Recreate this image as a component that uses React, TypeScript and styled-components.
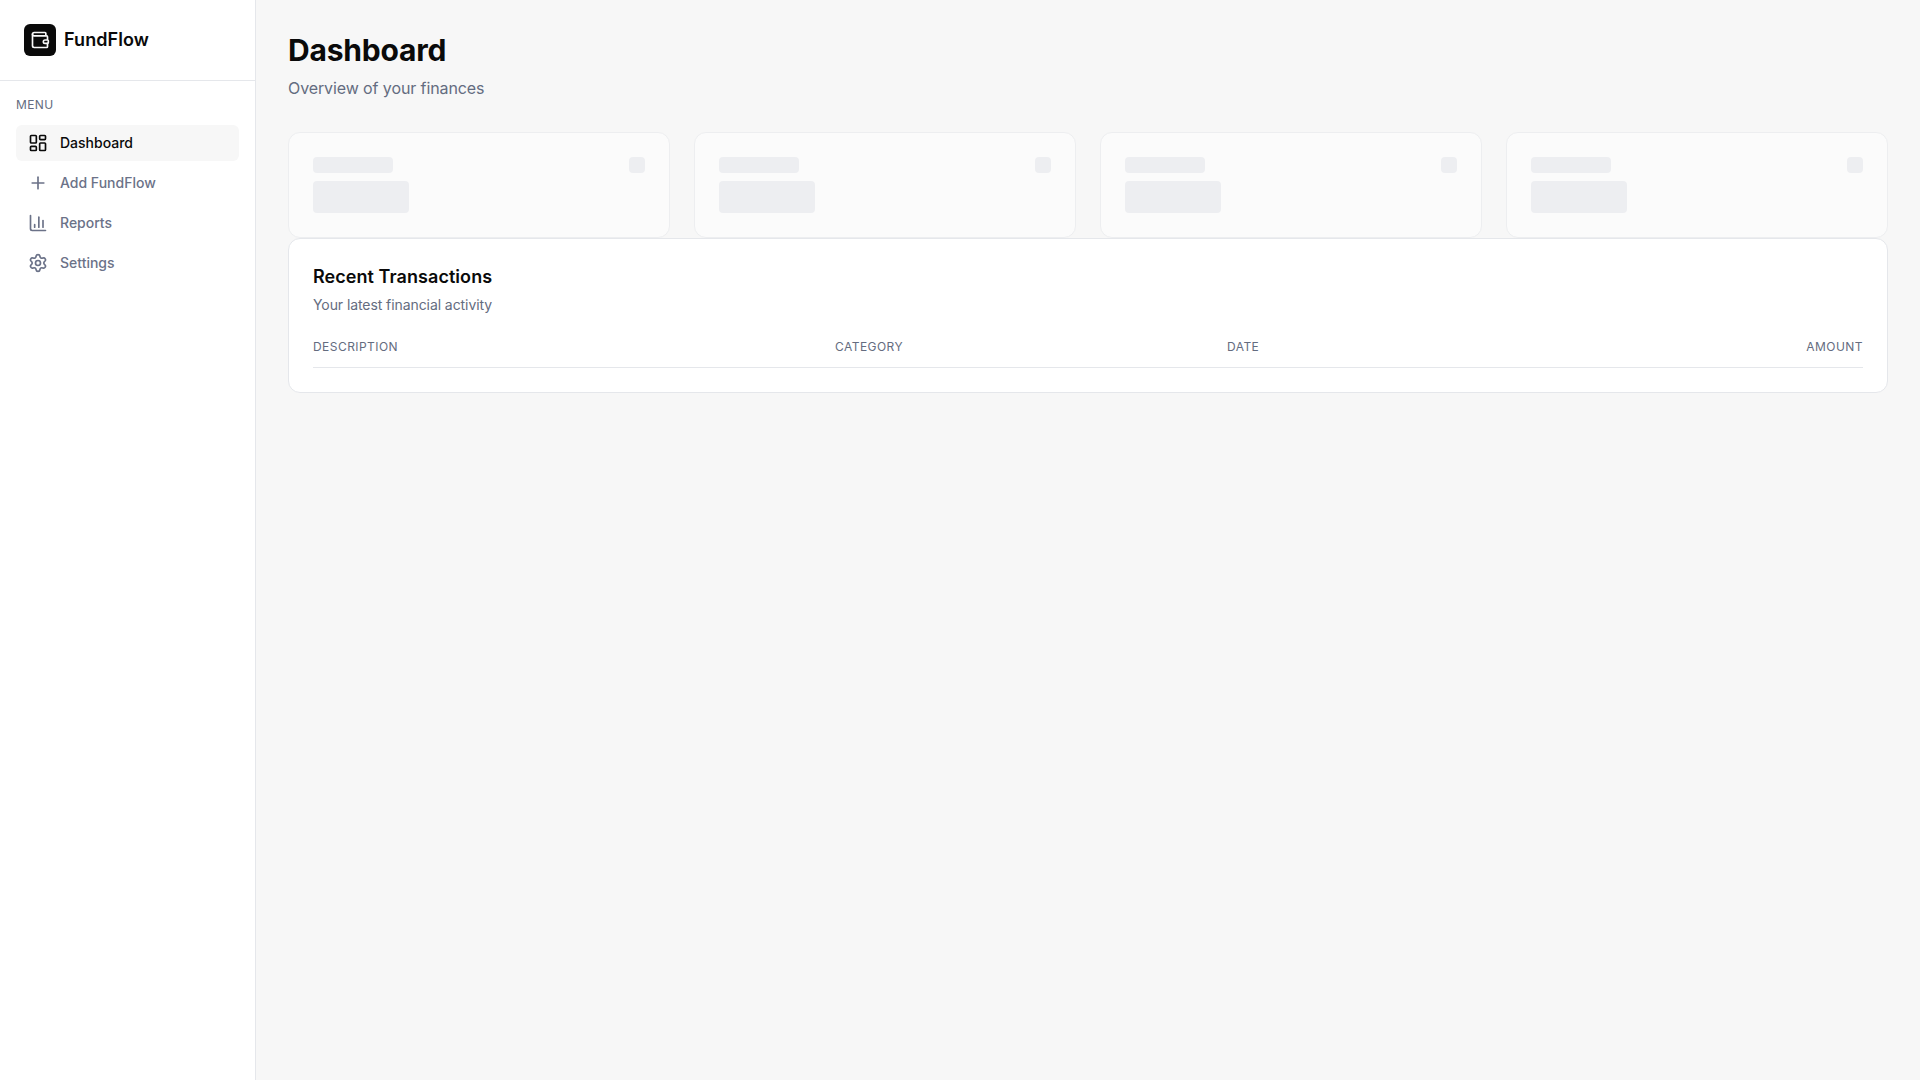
import React from "react";
import styled, { createGlobalStyle } from "styled-components";
import { LayoutDashboard, Plus, ChartColumn, Settings, Wallet } from "lucide-react";

const Global = createGlobalStyle`
  html, body { margin: 0; padding: 0; height: 100%; }
  body {
    font-family: Inter, "Liberation Sans", sans-serif;
    background: #f7f7f7;
    color: #0a0a0a;
  }
  * { box-sizing: border-box; }
`;

const Shell = styled.div`
  display: flex;
  min-height: 1080px;
`;

const Sidebar = styled.aside`
  width: 256px;
  flex: none;
  background: #ffffff;
  border-right: 1px solid #e5e7eb;
`;

const Brand = styled.div`
  height: 81px;
  display: flex;
  align-items: center;
  gap: 8px;
  padding: 0 24px;
  border-bottom: 1px solid #e5e7eb;
`;

const LogoMark = styled.div`
  width: 32px;
  height: 32px;
  border-radius: 6px;
  background: #0a0a0a;
  color: #fafafa;
  display: flex;
  align-items: center;
  justify-content: center;
`;

const BrandName = styled.span`
  font-size: 18px;
  line-height: 28px;
  font-weight: 600;
  letter-spacing: 0.08px;
`;

const Nav = styled.nav`
  padding: 16px;
`;

const NavLabel = styled.div`
  font-size: 12px;
  line-height: 16px;
  font-weight: 400;
  letter-spacing: 0.4px;
  text-transform: uppercase;
  color: #646c80;
  margin-bottom: 12px;
`;

const NavList = styled.div`
  display: flex;
  flex-direction: column;
  gap: 4px;
`;

const NavItem = styled.a<{ $active?: boolean }>`
  display: flex;
  align-items: center;
  gap: 12px;
  height: 36px;
  padding: 0 12px;
  border-radius: 6px;
  font-size: 14px;
  line-height: 20px;
  font-weight: 500;
  color: ${(p) => (p.$active ? "#0a0a0a" : "#6b7288")};
  background: ${(p) => (p.$active ? "#f7f7f7" : "transparent")};
`;

const Main = styled.main`
  flex: 1;
  min-width: 0;
  padding: 32px;
`;

const Title = styled.h1`
  margin: 0;
  font-size: 30px;
  line-height: 36px;
  font-weight: 700;
  letter-spacing: -0.2px;
`;

const Subtitle = styled.p`
  margin: 8px 0 32px;
  font-size: 16px;
  line-height: 24px;
  letter-spacing: -0.1px;
  color: #646c80;
`;

const StatGrid = styled.div`
  display: grid;
  grid-template-columns: repeat(4, 1fr);
  gap: 24px;
`;

const StatCard = styled.div`
  background: #ffffff;
  border: 1px solid #e5e7eb;
  border-radius: 12px;
  padding: 24px;
  opacity: 0.5;
`;

const StatTop = styled.div`
  display: flex;
  justify-content: space-between;
  margin-bottom: 8px;
`;

const Skeleton = styled.div<{ $w: number; $h: number }>`
  width: ${(p) => p.$w}px;
  height: ${(p) => p.$h}px;
  background: #e5e7ed;
  border-radius: 4px;
`;

const TableCard = styled.section`
  background: #ffffff;
  border: 1px solid #e5e7eb;
  border-radius: 12px;
  padding: 24px;
`;

const CardTitle = styled.h2`
  margin: 0 0 4px;
  font-size: 18px;
  line-height: 28px;
  font-weight: 600;
  letter-spacing: 0.06px;
`;

const CardDesc = styled.p`
  margin: 0 0 24px;
  font-size: 14px;
  line-height: 20px;
  letter-spacing: -0.08px;
  color: #646c80;
`;

const Table = styled.table`
  width: 100%;
  border-collapse: collapse;
  table-layout: fixed;
`;

const Th = styled.th<{ $w?: number; $right?: boolean }>`
  width: ${(p) => (p.$w ? `${p.$w}px` : "auto")};
  padding: 0 0 12px;
  font-size: 12px;
  line-height: 16px;
  font-weight: 400;
  letter-spacing: 0.45px;
  text-transform: uppercase;
  color: #646c80;
  text-align: ${(p) => (p.$right ? "right" : "left")};
  border-bottom: 1px solid #e5e7eb;
`;

const nav = [
  { label: "Dashboard", Icon: LayoutDashboard, active: true },
  { label: "Add FundFlow", Icon: Plus },
  { label: "Reports", Icon: ChartColumn },
  { label: "Settings", Icon: Settings },
];

export default function App() {
  return (
    <Shell>
      <Global />
      <Sidebar>
        <Brand>
          <LogoMark>
            <Wallet size={20} strokeWidth={2} />
          </LogoMark>
          <BrandName>FundFlow</BrandName>
        </Brand>
        <Nav>
          <NavLabel>Menu</NavLabel>
          <NavList>
            {nav.map(({ label, Icon, active }) => (
              <NavItem key={label} $active={active}>
                <Icon size={20} strokeWidth={2} />
                {label}
              </NavItem>
            ))}
          </NavList>
        </Nav>
      </Sidebar>
      <Main>
        <Title>Dashboard</Title>
        <Subtitle>Overview of your finances</Subtitle>
        <StatGrid>
          {[0, 1, 2, 3].map((i) => (
            <StatCard key={i}>
              <StatTop>
                <Skeleton $w={80} $h={16} />
                <Skeleton $w={16} $h={16} />
              </StatTop>
              <Skeleton $w={96} $h={32} />
            </StatCard>
          ))}
        </StatGrid>
        <TableCard>
          <CardTitle>Recent Transactions</CardTitle>
          <CardDesc>Your latest financial activity</CardDesc>
          <Table>
            <thead>
              <tr>
                <Th $w={522}>Description</Th>
                <Th $w={392}>Category</Th>
                <Th>Date</Th>
                <Th $right>Amount</Th>
              </tr>
            </thead>
          </Table>
        </TableCard>
      </Main>
    </Shell>
  );
}
